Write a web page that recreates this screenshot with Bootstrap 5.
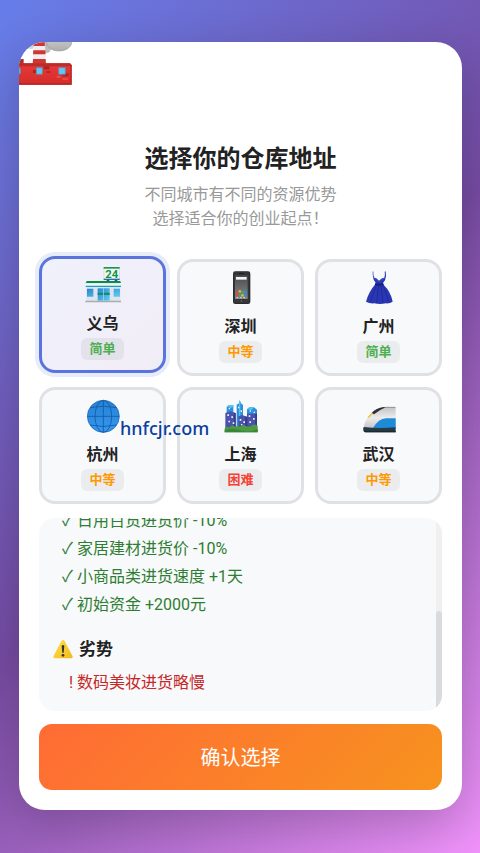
<!DOCTYPE html>
<html lang="zh-CN">
<head>
<meta charset="utf-8">
<meta name="viewport" content="width=device-width, initial-scale=1">
<title>选择你的仓库地址</title>
<link href="https://cdn.jsdelivr.net/npm/bootstrap@5.3.0/dist/css/bootstrap.min.css" rel="stylesheet">
<style>
  body {
    font-family: Roboto, "Noto Sans CJK SC", sans-serif;
    color: #222;
    background: linear-gradient(135deg, #667eea 0%, #764ba2 50%, #f093fb 100%);
  }
  .page { padding: 42px 18px 43px 19px; }
  .sheet {
    padding: 20px;
    border-radius: 26px;
    box-shadow: 0 16px 48px rgba(0, 0, 0, .2);
  }
  .factory { top: 0; left: 0; width: 54px; height: 44px; }
  .intro { padding-top: 79px; margin-bottom: 28px; }
  .intro h1 { font-size: 24px; line-height: 36px; margin-bottom: 6px; }
  .intro p { font-size: 16px; line-height: 24px; color: #999; }
  .cities { display: grid; grid-template-columns: repeat(3, 1fr); gap: 11px; margin-bottom: 14px; }
  .city {
    padding: 8px 8px 10px;
    border: 3px solid #dfe1e4;
    border-radius: 16px;
    background: #f8f9fb;
    cursor: pointer;
  }
  .btn-check:checked + .city {
    border-color: #5a73dd;
    background: linear-gradient(135deg, #f0f1fc, #f1edf6);
    box-shadow: 0 0 0 4px #e6ecfa;
    transform: translateY(-3px);
  }
  .city svg { width: 36px; height: 36px; margin-bottom: 9px; }
  .city-name { font-size: 16px; line-height: 24px; margin-bottom: 2px; }
  .level { font-size: 13px; line-height: 18px; padding: 2px 8px; border-radius: 6px; background: rgba(0, 0, 0, .05); }
  .easy { color: #4caf50; }
  .medium { color: #ff9800; }
  .hard { color: #f44336; }
  .site-tag {
    left: 101px; top: 374px;
    font: 500 18px/24px "Noto Sans", sans-serif;
    color: #0b3f9e;
  }
  .details { border-radius: 16px; background: #f8f9fb; margin-bottom: 13px; min-height: 0; }
  .scroller { display: flex; flex-direction: column-reverse; overflow-y: auto; scrollbar-width: none; padding: 0 14px; }
  .scroller::-webkit-scrollbar { display: none; }
  .track { width: 6px; background: #f0f0f1; }
  .thumb { height: 52%; border-radius: 3px; background: #d9dbdc; }
  .notes { font-size: 16px; line-height: 28px; padding-left: 8px; }
  .notes span { width: 16px; padding-right: 4px; }
  .pros { color: #2e7d32; margin-bottom: 16px; }
  .cons { color: #c62828; margin-bottom: 14px; }
  .details h2 { font-size: 17px; line-height: 28px; margin-bottom: 6px; gap: 6px; }
  .details h2 svg { width: 20px; height: 20px; }
  .confirm, .confirm:hover, .confirm:active {
    height: 66px;
    padding: 8px 12px 6px;
    font-size: 20px;
    color: #fff;
    border: 0;
    border-radius: 13px;
    background: linear-gradient(135deg, #ff6b35, #f7931e);
  }
</style>
</head>
<body>
<div class="page vh-100 d-flex">
  <main class="sheet bg-white flex-grow-1 d-flex flex-column position-relative overflow-hidden">
    <svg class="factory position-absolute" viewBox="57 126 162 132" aria-hidden="true">
      <defs>
        <linearGradient id="brick" x2="0" y2="1"><stop stop-color="#e83a36"/><stop offset="1" stop-color="#d42c2b"/></linearGradient>
        <linearGradient id="smoke" x2="0" y2="1"><stop stop-color="#d5d5d5"/><stop offset="1" stop-color="#adadad"/></linearGradient>
      </defs>
      <ellipse cx="92" cy="134" rx="15" ry="13" fill="#d4d4d4"/><ellipse cx="140" cy="140" rx="14" ry="19" fill="#bdbdbd"/>
      <ellipse cx="177" cy="127" rx="38" ry="26" fill="url(#smoke)" stroke="#999" stroke-width="2"/>
      <path d="M101 120h33l4 71H98z" fill="#f0eeee"/>
      <path d="M101 126h33l1 12h-35zM100 151h36l1 12H99zM99 177h38l1 15H98z" fill="#cf3734"/>
      <path d="M57 177h14v18H57z" fill="#a93231"/>
      <path d="M57 190h153l5 5v59H57z" fill="url(#brick)"/>
      <path d="M57 190h153l5 5v4H57z" fill="#bd2b2a"/><path d="M57 250h158v4H57zM211 195h4v59h-4z" fill="#b72524"/>
      <path d="M131 199h17v9h-17zM99 210h9v9h-9zM139 214h13v4h-13zM188 220h17v9h-17z" fill="#a92424"/>
      <path d="M170 228h12v5h-12zM187 235h17v4h-17z" fill="#ea504b"/>
      <path d="M109 203h18v20h-18zM176 203h20v20h-20zM57 204h4v17h-4z" fill="#61c6f2" stroke="#5793b8" stroke-width="2"/>
    </svg>

    <header class="intro text-center">
      <h1 class="fw-bold">选择你的仓库地址</h1>
      <p class="mb-0">不同城市有不同的资源优势<br>选择适合你的创业起点！</p>
    </header>

    <div class="cities" role="radiogroup" aria-label="城市">
      <div class="d-grid">
        <input class="btn-check" type="radio" name="city" id="yiwu" checked>
        <label class="city d-flex flex-column align-items-center" for="yiwu">
          <svg viewBox="163 57 108 108" aria-hidden="true">
            <defs><linearGradient id="glass" x2="1" y2="1"><stop stop-color="#2a86cf"/><stop offset="1" stop-color="#62cbf1"/></linearGradient></defs>
            <path d="M228 93h8v8h-8zM252 93h8v8h-8z" fill="#28557a"/>
            <path d="M220 58h46v36h-46z" fill="#f5faf7" stroke="#c3d3cd" stroke-width="2"/><path d="M219 57h48v5h-48z" fill="#17984b"/><path d="M219 92h48v4h-48z" fill="#2270b4"/>
            <text x="243" y="90" text-anchor="middle" font-family="Roboto, sans-serif" font-size="34" font-weight="700" fill="#159447">24</text>
            <path d="M168 99h101l2 7H165z" fill="#0f8b49"/><path d="M165 106h106v7H165z" fill="#eef8f5"/><path d="M165 113h106v4H165z" fill="#1b9fc1"/>
            <path d="M167 117h102v43H167z" fill="#dce5ed"/>
            <path d="M169 122h19v24h-19zM249 122h19v24h-19z" fill="url(#glass)"/><path d="M201 121h36v37h-36z" fill="url(#glass)"/>
            <path d="M201 134h36v7h-36z" fill="#118d70"/><path d="M218 121h2v37h-2z" fill="#a8dff5"/>
            <path d="M164 158h108v5H164z" fill="#a8acb0"/>
          </svg>
          <span class="city-name fw-bold">义乌</span><span class="level easy fw-bold">简单</span>
        </label>
      </div>
      <div class="d-grid">
        <input class="btn-check" type="radio" name="city" id="shenzhen">
        <label class="city d-flex flex-column align-items-center" for="shenzhen">
          <svg viewBox="157 66 108 108" aria-hidden="true">
            <defs><linearGradient id="screen" x2="0" y2="1"><stop stop-color="#494b4d"/><stop offset="1" stop-color="#858789"/></linearGradient></defs>
            <rect x="187" y="70" width="52" height="98" rx="7" fill="#29292b"/><rect x="189" y="72" width="47" height="94" rx="5" fill="#363638"/>
            <path d="M193 82h38v71h-38z" fill="url(#screen)"/><path d="M204 76h16v2h-16z" fill="#111"/>
            <path d="M196 87h32v8h-32z" fill="#f5f5f5"/>
            <g stroke-width="7"><path d="M196 132h7M196 142h7" stroke="#d84b38"/><path d="M204 130h7M212 142h7" stroke="#f1b930"/><path d="M212 132h7M204 142h7" stroke="#3caa66"/><path d="M220 132h8M220 142h8" stroke="#338bd4"/></g>
            <path d="M198 149h5M208 149h5M218 149h5" stroke="#ddd" stroke-width="3"/><circle cx="212" cy="159" r="2" fill="#777"/>
          </svg>
          <span class="city-name fw-bold">深圳</span><span class="level medium fw-bold">中等</span>
        </label>
      </div>
      <div class="d-grid">
        <input class="btn-check" type="radio" name="city" id="guangzhou">
        <label class="city d-flex flex-column align-items-center" for="guangzhou">
          <svg viewBox="157 66 108 108" aria-hidden="true">
            <path d="M194 71q-1 13 3 18 7 0 14 9 8-9 16-9 3-6 1-18l3-1q3 14-2 27l-6 8 3 7q20 19 26 49-9 6-20 5-19 4-35 0-15 1-25-5 9-31 26-50l3-7-6-9q-4-13-3-25z" fill="#2937b4"/>
            <path d="M200 105q12 3 23 0l2 7q-13 4-26 0z" fill="#18217d"/>
            <path d="M202 115q-10 23-16 46M209 115l-5 50M217 115l6 50M223 114q11 22 17 46" fill="none" stroke="#1f2b9c" stroke-width="3"/>
            <path d="M197 91l14 10 16-10" fill="none" stroke="#4050c6" stroke-width="2"/>
          </svg>
          <span class="city-name fw-bold">广州</span><span class="level easy fw-bold">简单</span>
        </label>
      </div>
      <div class="d-grid">
        <input class="btn-check" type="radio" name="city" id="hangzhou">
        <label class="city d-flex flex-column align-items-center" for="hangzhou">
          <svg viewBox="163 54 108 108" aria-hidden="true">
            <defs><linearGradient id="globe" x2="0" y2="1"><stop stop-color="#2681d5"/><stop offset="1" stop-color="#3398ef"/></linearGradient></defs>
            <circle cx="218" cy="109" r="48" fill="url(#globe)" stroke="#1c62ad" stroke-width="2"/>
            <g fill="none" stroke="#155aa4" stroke-width="2.5"><path d="M218 61v96M170 109h96M178 83q40-9 80 0M178 135q40 9 80 0"/><ellipse cx="218" cy="109" rx="25" ry="48"/></g>
          </svg>
          <span class="city-name fw-bold">杭州</span><span class="level medium fw-bold">中等</span>
        </label>
      </div>
      <div class="d-grid">
        <input class="btn-check" type="radio" name="city" id="shanghai">
        <label class="city d-flex flex-column align-items-center" for="shanghai">
          <svg viewBox="157 54 108 108" aria-hidden="true">
            <path d="M168 80l7-5h13v75h-20zM198 74l7-4 2-10 4 10 6 5v70h-19zM229 88l7-6h14l9 7v55h-30z" fill="#2b91dc"/>
            <path d="M168 80l7-5h13v5l-8 4zM205 70l2-10 2 10v50h-4zM229 88l7-6h14l-7 8z" fill="#5bc1f5"/>
            <path d="M164 99l16-5 15 5v53h-31zM229 101h30v48h-30zM203 109l12-4 15 6v38h-27z" fill="#4a52ad"/>
            <path d="M190 98l5 2v45h-5zM224 109l6 2v35h-6zM254 101h5v45h-5z" fill="#343a8c"/>
            <path d="M170 103h5v5h-5zM182 109h5v5h-5zM173 122h5v5h-5zM186 127h5v5h-5zM207 117h5v5h-5zM218 124h5v5h-5zM234 106h5v5h-5zM247 114h5v5h-5zM236 124h5v5h-5zM210 91h4v5h-4zM202 80h4v5h-4zM237 91h4v4h-4zM249 95h4v4h-4zM174 84h4v4h-4zM211 132h4v4h-4z" fill="#eef2ed"/>
            <path d="M162 145q7-8 14-2 8-12 17-3 9-5 15 1 6-10 18-3 9 4 15 0 9-9 20-1v20h-99z" fill="#4c9b40"/><path d="M162 151q23-9 47 0t52-4v10h-99z" fill="#39853a"/>
          </svg>
          <span class="city-name fw-bold">上海</span><span class="level hard fw-bold">困难</span>
        </label>
      </div>
      <div class="d-grid">
        <input class="btn-check" type="radio" name="city" id="wuhan">
        <label class="city d-flex flex-column align-items-center" for="wuhan">
          <svg viewBox="157 54 108 108" aria-hidden="true">
            <defs><linearGradient id="train" x2="0" y2="1"><stop stop-color="#c4c4c4"/><stop offset=".5" stop-color="#ececec"/><stop offset="1" stop-color="#c4c4c4"/></linearGradient></defs>
            <path d="M165 144q2-25 24-45 18-18 42-18h30v65h-96z" fill="url(#train)"/>
            <path d="M188 100q15-17 37-19l6 1q-19 8-35 21z" fill="#2e3032"/><path d="M176 113q6-9 14-15l4 2q-8 6-13 13z" fill="#e9c22f"/><path d="M229 82h31" stroke="#777" stroke-width="2"/>
            <path d="M193 144q17-28 39-29h29v29z" fill="#1e8bd8"/>
            <path d="M166 141q45 5 95 1v15h-91q-8-2-6-14z" fill="#263b46"/><path d="M166 152h95v5h-91z" fill="#182a34"/>
          </svg>
          <span class="city-name fw-bold">武汉</span><span class="level medium fw-bold">中等</span>
        </label>
      </div>
    </div>

    <section class="details d-flex flex-grow-1 overflow-hidden" aria-label="城市详情">
      <div class="scroller flex-grow-1">
        <div>
          <ul class="notes pros list-unstyled">
            <li class="d-flex"><span class="text-end">✓</span>日用百货进货价 -10%</li>
            <li class="d-flex"><span class="text-end">✓</span>家居建材进货价 -10%</li>
            <li class="d-flex"><span class="text-end">✓</span>小商品类进货速度 +1天</li>
            <li class="d-flex"><span class="text-end">✓</span>初始资金 +2000元</li>
          </ul>
          <h2 class="fw-bold d-flex align-items-center">
            <svg viewBox="0 0 60 60" aria-hidden="true">
              <defs><linearGradient id="warn" x2="1" y2="1"><stop stop-color="#ffe14a"/><stop offset="1" stop-color="#f5b91c"/></linearGradient></defs>
              <path d="M30 3q3 0 5 4l23 43q3 7-3 8H5q-6-1-3-8L25 7q2-4 5-4z" fill="url(#warn)"/>
              <path d="M26 20q4-4 8 0l-2 21h-4z" fill="#333"/><circle cx="30" cy="49" r="4" fill="#333"/>
            </svg>劣势
          </h2>
          <ul class="notes cons list-unstyled">
            <li class="d-flex"><span class="text-end">!</span>数码美妆进货略慢</li>
          </ul>
        </div>
      </div>
      <div class="track d-flex flex-column justify-content-end"><div class="thumb"></div></div>
    </section>

    <button type="button" class="confirm btn w-100 flex-shrink-0">确认选择</button>
    <span class="site-tag position-absolute">hnfcjr.com</span>
  </main>
</div>
<script src="https://cdn.jsdelivr.net/npm/bootstrap@5.3.0/dist/js/bootstrap.bundle.min.js"></script>
</body>
</html>
